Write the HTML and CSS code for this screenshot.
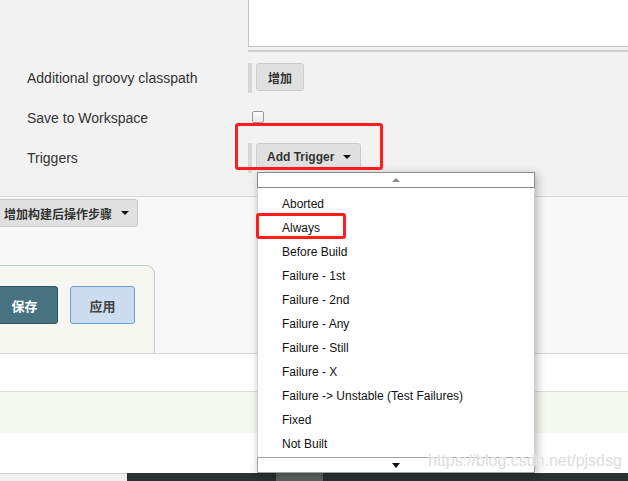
FILE: index.html
```html
<!DOCTYPE html>
<html lang="zh">
<head>
    <meta charset="UTF-8">
    <title>Job 配置</title>
    <link rel="stylesheet" href="styles.css">
</head>
<body>
    <!-- Bloque de configuración -->
    <div class="config">
        <div class="editor"></div>
        <div class="editor-edge"></div>

        <div class="row row-classpath">
            <div class="label">Additional groovy classpath</div>
            <div class="field">
                <span class="bar"></span>
                <button class="btn">增加</button>
            </div>
        </div>
        <div class="row row-save">
            <div class="label">Save to Workspace</div>
            <div class="field">
                <span class="check"></span>
            </div>
        </div>
        <div class="row row-triggers">
            <div class="label">Triggers</div>
            <div class="field">
                <span class="bar"></span>
                <button class="btn">Add Trigger <span class="caret"></span></button>
            </div>
        </div>
    </div>

    <!-- Acciones posteriores -->
    <div class="post">
        <button class="btn btn-post">增加构建后操作步骤 <span class="caret"></span></button>
        <div class="bottom-bar">
            <button class="btn-save">保存</button>
            <button class="btn-apply">应用</button>
        </div>
    </div>

    <div class="band band-white"></div>
    <div class="band band-green"></div>
    <div class="band band-last"></div>

    <div class="footer">
        <div class="footer-left"></div>
        <div class="footer-dark"><span class="footer-tab"></span></div>
    </div>

    <!-- Menú desplegable de triggers -->
    <div class="menu">
        <div class="scroll scroll-up"><span class="tri-up"></span></div>
        <ul class="menu-list">
            <li>Aborted</li>
            <li>Always</li>
            <li>Before Build</li>
            <li>Failure - 1st</li>
            <li>Failure - 2nd</li>
            <li>Failure - Any</li>
            <li>Failure - Still</li>
            <li>Failure - X</li>
            <li>Failure -&gt; Unstable (Test Failures)</li>
            <li>Fixed</li>
            <li>Not Built</li>
        </ul>
        <div class="scroll scroll-down"><span class="tri-down"></span></div>
    </div>

    <!-- Marcas rojas -->
    <div class="mark mark-trigger"></div>
    <div class="mark mark-always"></div>

    <div class="watermark">https://blog.csdn.net/pjsdsg</div>
</body>
</html>
```

FILE: styles.css
```css
body {
    margin: 0;
    font-family: "Liberation Sans", Arial, "Noto Sans CJK SC", sans-serif;
    color: #333;
    width: 628px;
    height: 481px;
    overflow: hidden;
    position: relative;
    background: #fff;
}
button {
    font-family: "Liberation Sans", Arial, "Noto Sans CJK SC", sans-serif;
    white-space: nowrap;
}

/* Configuración */
.config {
    background-color: #f2f2f2;
    height: 196px;
    overflow: hidden;
}
.editor {
    margin-left: 248px;
    height: 46px;
    background: #fff;
    border: 1px solid #c4c4c4;
    border-top: 0;
    border-right: 0;
}
.editor-edge {
    margin-left: 248px;
    margin-top: 3px;
    height: 2px;
    background: #cdcdcd;
}
.row {
    display: flex;
    align-items: center;
}
.row-classpath {
    margin-top: 11px;
    height: 30px;
}
.row-save {
    height: 50px;
}
.row-triggers {
    height: 30px;
}
.label {
    width: 248px;
    padding-left: 27px;
    box-sizing: border-box;
    font-size: 14px;
    color: #333;
    margin-top: -1px;
}
.field {
    display: flex;
    align-items: flex-start;
    height: 100%;
}
.row-save .field {
    align-items: center;
}
.bar {
    width: 4px;
    height: 30px;
    background: #d6d6d6;
}
.btn {
    margin-left: 4px;
    height: 28px;
    padding: 0 11px;
    background: #e0e0e0;
    border: 1px solid #cbcbcb;
    border-radius: 3px;
    font-size: 12px;
    font-weight: bold;
    color: #333;
    display: flex;
    align-items: center;
}
.row-triggers .btn {
    height: 27px;
    padding: 0 9px 0 10px;
}
.caret {
    display: inline-block;
    margin-left: 9px;
    border-left: 4px solid transparent;
    border-right: 4px solid transparent;
    border-top: 4px solid #111;
}
.check {
    margin-left: 4px;
    margin-top: -2px;
    width: 10px;
    height: 10px;
    border: 1px solid #9a9a9a;
    border-radius: 2px;
    background: linear-gradient(#fdfdfd, #e8e8e8);
}

/* Acciones posteriores */
.post {
    background: #f8f8f8;
    border-top: 1px solid #d9d9d9;
    height: 156px;
    position: relative;
}
.btn-post {
    margin-left: -8px;
    margin-top: 2px;
    padding: 0 8px 0 11px;
    height: 28px;
}
.bottom-bar {
    position: absolute;
    left: -10px;
    bottom: 0;
    width: 165px;
    height: 88px;
    box-sizing: border-box;
    border: 1px solid #b8d2bf;
    border-bottom: 0;
    border-top-right-radius: 9px;
    background: #f5f7f0;
    padding-top: 20px;
    display: flex;
    gap: 12px;
    align-items: flex-start;
}
.btn-save {
    width: 67px;
    height: 38px;
    background: #46737f;
    border: 1px solid #2e5360;
    border-radius: 3px;
    color: #fff;
    font-size: 13px;
    font-weight: bold;
}
.btn-apply {
    width: 65px;
    height: 38px;
    background: #cdddef;
    border: 1px solid #6c9fd6;
    border-radius: 3px;
    color: #444;
    font-size: 13px;
    font-weight: bold;
}

/* Franjas inferiores */
.band {
    border-top: 1px solid #d6d6d6;
}
.band-white {
    height: 37px;
    background: #fff;
}
.band-green {
    height: 41px;
    background: #f6f8f2;
    border-top-color: #dcdcdc;
}
.band-last {
    height: 40px;
    border-top: 0;
    background: #fff;
}
.footer {
    display: flex;
    height: 8px;
}
.footer-left {
    width: 127px;
    background: #f0f0f0;
    border-top: 1px solid #cfcfcf;
}
.footer-dark {
    flex: 1;
    background: #283133;
    padding-left: 149px;
}
.footer-tab {
    display: block;
    width: 47px;
    height: 8px;
    background: #59625f;
}

/* Menú */
.menu {
    position: absolute;
    left: 257px;
    top: 172px;
    width: 278px;
    background: #fff;
    box-shadow: 2px 2px 9px rgba(0, 0, 0, 0.28);
}
.scroll {
    height: 14px;
    border: 1px solid #8c8c8c;
    display: flex;
    justify-content: center;
    align-items: center;
}
.scroll-down {
    border-color: #a0a0a0;
}
.tri-up {
    border-left: 4px solid transparent;
    border-right: 4px solid transparent;
    border-bottom: 4px solid #8a8a8a;
}
.tri-down {
    border-left: 4px solid transparent;
    border-right: 4px solid transparent;
    border-top: 5px solid #111;
}
.menu-list {
    list-style: none;
    margin: 0;
    padding: 4px 0 1px 24px;
    border-left: 1px solid #cfcfcf;
    border-right: 1px solid #cfcfcf;
}
.menu-list li {
    height: 24px;
    line-height: 24px;
    font-size: 12px;
    color: #111;
}

/* Marcas */
.mark {
    position: absolute;
    border: 3px solid #ff1c1c;
    border-radius: 3px;
    box-sizing: border-box;
}
.mark-trigger {
    left: 235px;
    top: 123px;
    width: 148px;
    height: 47px;
}
.mark-always {
    left: 256px;
    top: 213px;
    width: 90px;
    height: 26px;
}
.watermark {
    position: absolute;
    left: 428px;
    top: 452px;
    font-size: 16px;
    color: rgba(205, 205, 205, 0.7);
    text-shadow: 0 0 1px #fff, 0 0 1px #fff;
}
```
